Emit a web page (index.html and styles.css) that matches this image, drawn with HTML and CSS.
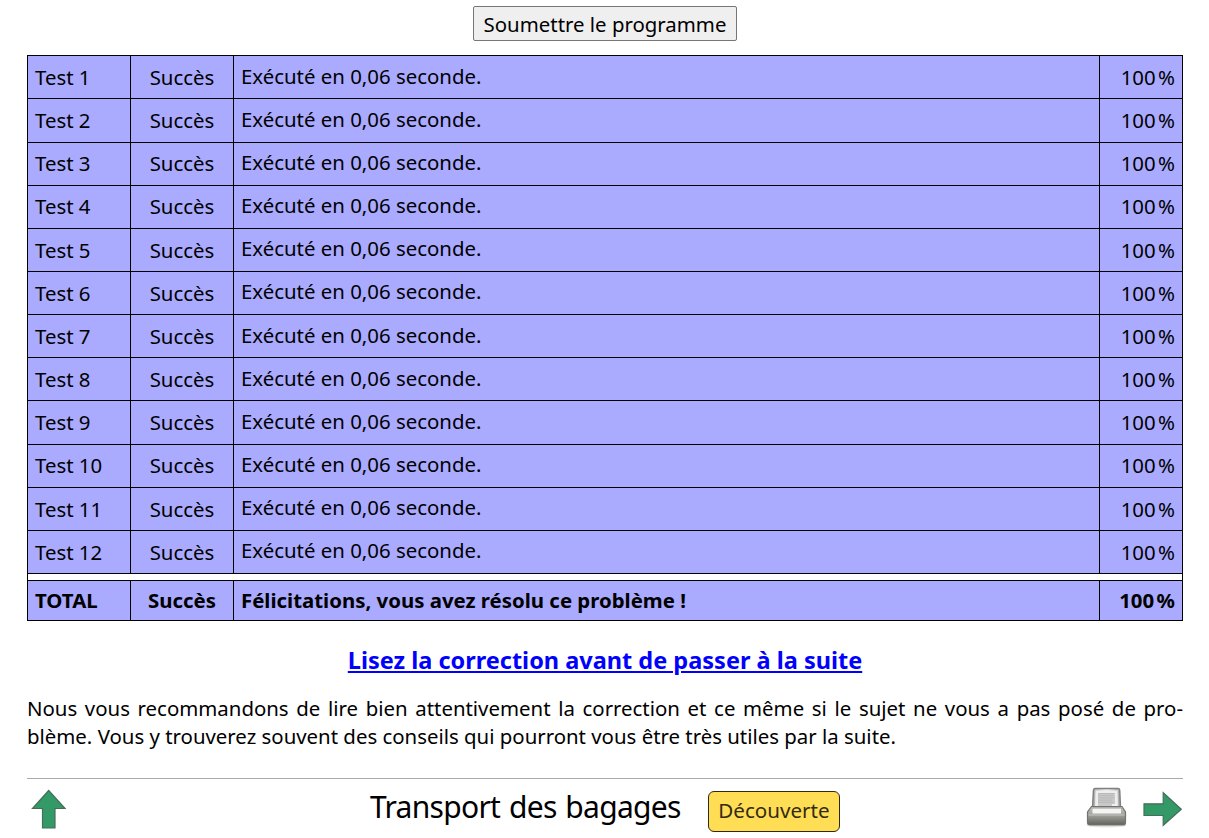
FILE: index.html
```html
<!DOCTYPE html>
<html lang="fr">
<head>
<meta charset="utf-8">
<title>Transport des bagages</title>
<link rel="stylesheet" href="styles.css">
</head>
<body>
<main class="page">
  <div class="submit"><button class="submit-button" type="button">Soumettre le programme</button></div>
  <section class="results">
    <div class="row"><span class="cell">Test 1</span><span class="cell status">Succès</span><span class="cell message">Exécuté en 0,06 seconde.</span><span class="cell score">100<i class="thin"></i>%</span></div>
    <div class="row"><span class="cell">Test 2</span><span class="cell status">Succès</span><span class="cell message">Exécuté en 0,06 seconde.</span><span class="cell score">100<i class="thin"></i>%</span></div>
    <div class="row"><span class="cell">Test 3</span><span class="cell status">Succès</span><span class="cell message">Exécuté en 0,06 seconde.</span><span class="cell score">100<i class="thin"></i>%</span></div>
    <div class="row"><span class="cell">Test 4</span><span class="cell status">Succès</span><span class="cell message">Exécuté en 0,06 seconde.</span><span class="cell score">100<i class="thin"></i>%</span></div>
    <div class="row"><span class="cell">Test 5</span><span class="cell status">Succès</span><span class="cell message">Exécuté en 0,06 seconde.</span><span class="cell score">100<i class="thin"></i>%</span></div>
    <div class="row"><span class="cell">Test 6</span><span class="cell status">Succès</span><span class="cell message">Exécuté en 0,06 seconde.</span><span class="cell score">100<i class="thin"></i>%</span></div>
    <div class="row"><span class="cell">Test 7</span><span class="cell status">Succès</span><span class="cell message">Exécuté en 0,06 seconde.</span><span class="cell score">100<i class="thin"></i>%</span></div>
    <div class="row"><span class="cell">Test 8</span><span class="cell status">Succès</span><span class="cell message">Exécuté en 0,06 seconde.</span><span class="cell score">100<i class="thin"></i>%</span></div>
    <div class="row"><span class="cell">Test 9</span><span class="cell status">Succès</span><span class="cell message">Exécuté en 0,06 seconde.</span><span class="cell score">100<i class="thin"></i>%</span></div>
    <div class="row"><span class="cell">Test 10</span><span class="cell status">Succès</span><span class="cell message">Exécuté en 0,06 seconde.</span><span class="cell score">100<i class="thin"></i>%</span></div>
    <div class="row"><span class="cell">Test 11</span><span class="cell status">Succès</span><span class="cell message">Exécuté en 0,06 seconde.</span><span class="cell score">100<i class="thin"></i>%</span></div>
    <div class="row"><span class="cell">Test 12</span><span class="cell status">Succès</span><span class="cell message">Exécuté en 0,06 seconde.</span><span class="cell score">100<i class="thin"></i>%</span></div>
    <div class="separator"></div>
    <div class="row total"><span class="cell">TOTAL</span><span class="cell status">Succès</span><span class="cell">Félicitations, vous avez résolu ce problème&nbsp;!</span><span class="cell score">100<i class="thin"></i>%</span></div>
  </section>
  <h2 class="correction"><a href="#correction">Lisez la correction avant de passer à la suite</a></h2>
  <p class="advice"><span class="advice-line">Nous vous recommandons de lire bien attentivement la correction et ce même si le sujet ne vous a pas posé de pro-</span><span>blème. Vous y trouverez souvent des conseils qui pourront vous être très utiles par la suite.</span></p>
  <footer class="footer">
    <a class="up" href="#top" aria-label="Remonter">
      <svg width="44" height="50" viewBox="0 0 44 50"><path class="arrow" d="M21.700 11.500 38 29.500H28V49H15.500V29.500H5.500Z"/></svg>
    </a>
    <div class="heading">
      <span class="title">Transport des bagages</span>
      <span class="badge">Découverte</span>
    </div>
    <div class="tools">
      <svg class="printer" width="42" height="42" viewBox="0 0 42 42">
        <defs>
          <linearGradient id="body" x1="0" y1="0" x2="0" y2="1"><stop offset="0" stop-color="#c4c4c0"/><stop offset=".45" stop-color="#a3a39d"/><stop offset="1" stop-color="#62625c"/></linearGradient>
          <linearGradient id="back" x1="0" y1="0" x2="1" y2="0"><stop offset="0" stop-color="#aaa"/><stop offset=".5" stop-color="#eee"/><stop offset="1" stop-color="#aaa"/></linearGradient>
        </defs>
        <ellipse cx="21.500" cy="38" rx="20" ry="2.500" fill="#e2e2e2"/>
        <path d="M8.500 3Q8.700 1.500 10 1.500H33Q34.500 1.500 34.700 3L35.500 21H7.500Z" fill="url(#back)" stroke="#808080" stroke-width="1.500"/>
        <path d="M10.500 3.500H32.500L33 22H10Z" fill="#eee"/>
        <path d="M13 6H30V17H27V19H13Z" fill="#c9c9c9"/>
        <path d="M13 6.500H29M13 8.700H28M13 10.900H29M13 13.100H27M13 15.300H28" stroke="#b8b8b8"/>
        <path d="M6.500 19.500H37L40.500 25V35.500Q40.500 38 38 38H5Q2.500 38 2.500 35.500V25Z" fill="url(#body)" stroke="#74746e" stroke-width="1.200"/>
        <path d="M8 20.500H36L37 22H7Z" fill="#999"/>
        <path d="M7.500 21.500H36V26.500H7.500Z" fill="#f4f4f4"/>
        <path d="M3.500 28H39.500" stroke="#c4c4bf"/>
      </svg>
      <svg class="next" width="44" height="38" viewBox="0 0 44 38"><path class="arrow" d="M5 12.800H24.200V1.700L42.300 18.200 24.200 34.300V24.500H5Z"/></svg>
    </div>
  </footer>
</main>
</body>
</html>
```
FILE: styles.css
```css
* { box-sizing: border-box; }
body {
  margin: 0;
  background: #fff;
  color: #000;
  font: 20.4px/28px "Noto Sans", sans-serif;
  overflow: hidden;
}
.page { width: 1156px; margin-left: 27px; }
.submit { height: 55.19px; padding-top: 6px; text-align: center; }
.submit-button {
  width: 264px;
  height: 35px;
  padding: 0;
  border: 1px solid #767676;
  border-radius: 2px;
  background: #efefef;
  color: #000;
  font: inherit;
}
.results { border: solid #000; border-width: 0 1px 1px; }
.row {
  display: grid;
  grid-template-columns: 103px 103px 866px 1fr;
  height: 43.16px;
  border-top: 1px solid #000;
  background: #aaf;
}
.cell { padding: 6.75px 7px 0; border-right: 1px solid #000; white-space: nowrap; }
.cell:last-child { border-right: 0; }
.status { text-align: center; }
.message { padding-top: 5.38px; }
.score { text-align: right; }
.thin { display: inline-block; width: 2.4px; }
.separator { height: 6.8px; border-top: 1px solid #000; }
.total { height: 40px; font-weight: bold; }
.total .cell { padding-top: 5px; }
.correction { margin: 23px 0 0; text-align: center; font-size: 23.5px; line-height: 32px; }
.correction a { color: #00f; }
.advice { margin: 18px 0 0; }
.advice span { display: block; }
.advice-line { text-align-last: justify; white-space: nowrap; }
.footer {
  display: grid;
  grid-template-columns: 1fr auto 1fr;
  height: 60px;
  margin-top: 28px;
  border-top: 1px solid #aaa;
}
.up { height: 58px; }
.up svg { display: block; }
.arrow { fill: #396; stroke: #456f5a; stroke-width: 1.2; }
.heading { display: flex; align-items: flex-start; gap: 27px; }
.title { width: 311px; padding-top: 7px; font-size: 30px; line-height: 42px; letter-spacing: -0.7px; word-spacing: 1.6px; white-space: nowrap; }
.badge {
  width: 132px;
  height: 41px;
  margin-top: 12px;
  border: 1px solid #32290a;
  border-radius: 6px;
  background: #fd5;
  color: #332b11;
  font-size: 20.6px;
  line-height: 37px;
  text-align: center;
}
.tools { display: flex; justify-content: flex-end; align-items: flex-start; padding-top: 8px; gap: 12px; }
.next { margin-top: 4px; }
```
